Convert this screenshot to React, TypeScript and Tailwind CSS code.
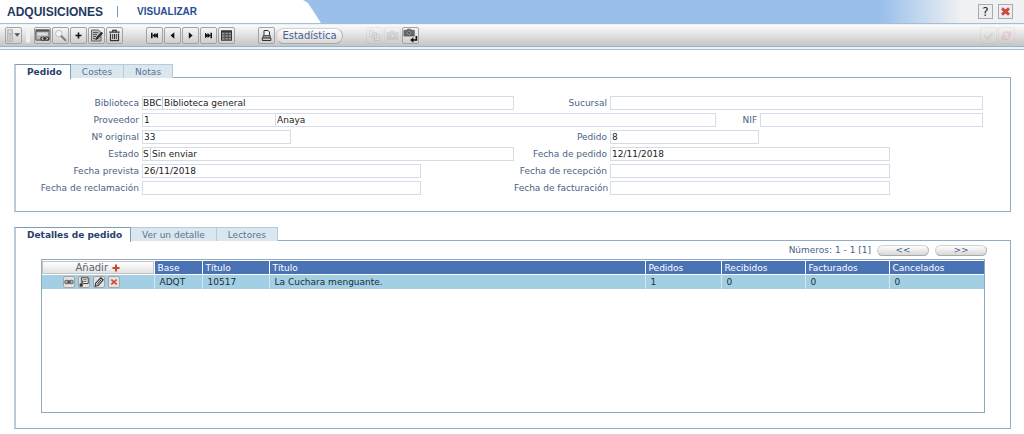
import type { ReactNode } from 'react';

type FieldProps = {
  id: string;
  label: string;
  value?: string;
  code?: string;
  codeClass?: string;
  className?: string;
};

const labelClass = 'pr-[3px] text-right whitespace-nowrap text-[#4a6285]';
const boxClass = 'h-[14px] min-w-0 border border-[#d3dce7] bg-white';
const inputClass = 'h-full min-w-0 bg-transparent text-[#222] outline-none';
const panelClass = 'border border-l-2 border-[#8fadc8] border-l-[#b9cbdc]';

const Field = ({ id, label, value = '', code, codeClass = '', className = 'w-full' }: FieldProps) => (
  <>
    <label htmlFor={id} className={labelClass}>{label}</label>
    <div className={`${boxClass} flex ${className}`}>
      {code && (
        <input
          aria-label={`${label} código`}
          defaultValue={code}
          className={`${inputClass} border-r border-[#b9cde2] ${codeClass}`}
        />
      )}
      <input id={id} defaultValue={value} className={`${inputClass} flex-1 pl-px`} />
    </div>
  </>
);

const ToolButton = ({ label, faint, children }: { label: string; faint?: boolean; children: ReactNode }) => (
  <button
    type="button"
    aria-label={label}
    disabled={faint}
    className={`flex h-[17px] w-[17px] shrink-0 items-center justify-center rounded-xs border border-[#a3a3a3] bg-linear-to-b from-[#f6f6f6] to-[#cfcfcf] ${faint ? 'opacity-15' : ''}`}
  >
    {children}
  </button>
);

const Svg = ({ children, size = 'size-[13px]' }: { children: ReactNode; size?: string }) => (
  <svg viewBox="0 0 13 13" className={`${size} shrink-0`} fill="none" stroke="#333" strokeWidth="1" aria-hidden="true">
    {children}
  </svg>
);

const IconMenu = () => (
  <Svg size="size-[15px]">
    <path d="M1.5 1.5h4v10h-4z" stroke="#b0b0b0" fill="#ddd" />
    <path d="M1.5 5h4M3.5 5v6" stroke="#b0b0b0" />
    <path d="M7.2 4.5h5L9.7 7.5z" fill="#555" stroke="none" />
  </Svg>
);

const IconWindow = () => (
  <Svg size="size-[15px]">
    <rect x=".7" y="1.5" width="11.6" height="9" rx=".5" fill="#b5b5b5" stroke="#666" />
    <path d="M1 2.4h11" stroke="#555" strokeWidth="1.6" />
    <path d="M2 5.2h9" stroke="#dedede" strokeWidth="2.4" />
    <rect x="5" y="7.8" width="3.6" height="2.8" rx="1.4" fill="#ccc" />
    <rect x="8.2" y="7.8" width="3.6" height="2.8" rx="1.4" fill="#ccc" />
    <path d="M7 9.2h3" />
  </Svg>
);

const IconSearch = () => (
  <Svg>
    <circle cx="4.8" cy="4.6" r="3.2" fill="#f4f4f4" stroke="#bbb" />
    <path d="M7.5 7.2l4 4" stroke="#808080" strokeWidth="2" strokeLinecap="round" />
  </Svg>
);

const IconPlus = () => (
  <Svg>
    <path d="M6.5 3.5v6M3.5 6.5h6" stroke="#111" strokeWidth="1.6" />
  </Svg>
);

const IconEdit = () => (
  <Svg>
    <path d="M1.5 1h7l2.5 2.5V12H1.5z" fill="#bdbdbd" stroke="#666" />
    <path d="M3 3.5h5M3 5.5h4M3 7.5h3M3 9.5h2" stroke="#555" />
    <path d="M11.5 3L6.5 8.5l-.8 2 2-.7L12.5 4.5z" fill="#333" stroke="#222" strokeWidth=".8" />
  </Svg>
);

const IconTrash = () => (
  <Svg>
    <path d="M1.3 3.2h10.4M4.8 3V1.3h3.4V3" strokeWidth="1.3" />
    <path d="M2.5 4.5v7.2h8V4.5" fill="#ddd" strokeWidth="1.2" />
    <path d="M4.7 5v5.2M6.5 5v5.2M8.3 5v5.2" />
  </Svg>
);

const IconFirst = () => (
  <Svg>
    <path d="M3 3.7h1.6v5.6H3zM10 3.7v5.6L7.4 7.2v2.1L4.6 6.5l2.8-2.8v2.1z" fill="#111" stroke="none" />
  </Svg>
);

const IconPrev = () => (
  <Svg>
    <path d="M8.3 3.3v6.4L4.5 6.5z" fill="#111" stroke="none" />
  </Svg>
);

const IconNext = () => (
  <Svg>
    <path d="M4.8 3.3v6.4l3.8-3.2z" fill="#111" stroke="none" />
  </Svg>
);

const IconLast = () => (
  <Svg>
    <path d="M10 3.7H8.4v5.6H10zM3 3.7v5.6l2.6-2.1v2.1l2.8-2.8-2.8-2.8v2.1z" fill="#111" stroke="none" />
  </Svg>
);

const IconGrid = () => (
  <Svg>
    <rect x="1.5" y="1.8" width="10" height="9.4" fill="#999" stroke="#333" />
    <path d="M1.5 2.8h10" stroke="#333" strokeWidth="1.6" />
    <path d="M5 2v9M8.2 2v9M1.5 5.8h10M1.5 8.4h10" stroke="#444" strokeWidth=".9" />
  </Svg>
);

const IconPrint = () => (
  <Svg>
    <path d="M4 6.5V1.5h4l1.5 1.5v3.5z" fill="#f4f4f4" />
    <path d="M3 6.5h7.2v3H3z" fill="#999" stroke="#555" />
    <path d="M2.3 9h8.6v2.5H2.3z" fill="#ccc" />
  </Svg>
);

const IconCopies = () => (
  <Svg>
    <path d="M1.5 1.5h4v6h-4zM4 3.5h4.5v6H4zM6.5 5.5h5v6h-5z" fill="#eee" stroke="#666" />
    <path d="M7.5 8h2.5" stroke="#666" />
  </Svg>
);

const IconCamera = () => (
  <Svg>
    <path d="M1 3.5h2.5l1-1.5h4l1 1.5H12v7H1z" fill="#888" stroke="#777" />
    <circle cx="6.5" cy="6.8" r="2.2" fill="#ddd" />
  </Svg>
);

const IconCameraReturn = () => (
  <Svg size="size-[15px]">
    <path d="M.8 2h2.3l.8-1h2.8l.8 1h2.3v5h-9z" fill="#666" stroke="#555" strokeWidth=".6" />
    <circle cx="5.3" cy="4.3" r="1.4" fill="#555" stroke="#999" strokeWidth=".7" />
    <path d="M11.6 7v3.4H8.5" stroke="#111" strokeWidth="1.4" />
    <path d="M9 8v4.8L6.2 10.4z" fill="#111" stroke="none" />
  </Svg>
);

const IconCheck = () => (
  <Svg>
    <path d="M2.5 6.5l3 3.5 5.5-6" stroke="#7c9a2e" strokeWidth="2" />
  </Svg>
);

const IconRefresh = () => (
  <Svg>
    <path d="M3 6c.5-3 4-3.5 6-2l1.5-1.2V6H7.2" stroke="#e24a5a" strokeWidth="1.8" />
    <path d="M10 7.2c-.5 3-4 3.5-6 2l-1.5 1.2V7.2h3.3" stroke="#e24a5a" strokeWidth="1.8" />
  </Svg>
);

const IconLink = () => (
  <Svg size="size-[10px]">
    <rect x="1" y="4.2" width="5.6" height="4.6" rx="2.3" fill="#bbb" strokeWidth="1.4" stroke="#666" />
    <rect x="6.4" y="4.2" width="5.6" height="4.6" rx="2.3" fill="#bbb" strokeWidth="1.4" stroke="#666" />
    <path d="M3.8 6.5h5.4" strokeWidth="1.4" />
  </Svg>
);

const IconNote = () => (
  <Svg size="size-[10px]">
    <path d="M3 1h9v7.5H5z" fill="#eee" strokeWidth="1.3" stroke="#444" />
    <path d="M3 1v8M5.5 3.5h4.5M5.5 5.8h4" strokeWidth="1.1" stroke="#555" />
    <path d="M.8 8.5h4v4h-4z" fill="#333" stroke="none" />
  </Svg>
);

const IconPencil = () => (
  <Svg size="size-[10px]">
    <path d="M8.8 1l3.2 2.8-6.5 7.4-4 .8.6-4z" fill="#ddd" strokeWidth="1.4" />
    <path d="M9.5 3.5L4 9.7" strokeWidth="1.3" />
  </Svg>
);

const IconCross = ({ size = 'size-[13px]', width = '2.8' }: { size?: string; width?: string }) => (
  <Svg size={size}>
    <path d="M3 3.4l7 6.2M10 3.4L3 9.6" stroke="#d0473a" strokeWidth={width} />
  </Svg>
);

const Tabs = ({ items }: { items: string[] }) => (
  <div role="tablist" className="relative z-10 -mb-[2px] flex h-[15px]">
    {items.map((item, i) => (
      <button
        key={item}
        type="button"
        role="tab"
        aria-selected={i === 0}
        className={
          i === 0
            ? 'border-t border-r border-l-2 border-[#7d9cb9] border-l-[#b9cbdc] bg-white pr-2 pl-[11px] font-bold text-[#27406b]'
            : 'mb-px border-t border-r border-[#b4cbd9] bg-[#dbe7ee] px-[11px] text-[#5a7391]'
        }
      >
        {item}
      </button>
    ))}
  </div>
);

const rowActions = [
  { label: 'Enlazar', icon: <IconLink /> },
  { label: 'Ver nota', icon: <IconNote /> },
  { label: 'Editar', icon: <IconPencil /> },
  { label: 'Eliminar', icon: <IconCross size="size-[10px]" width="2" /> },
];

const headers = ['Base', 'Título', 'Título', 'Pedidos', 'Recibidos', 'Facturados', 'Cancelados'];
const row = ['ADQT', '10517', 'La Cuchara menguante.', '1', '0', '0', '0'];

const pillClass =
  'rounded-full border border-[#d2d2d2] border-r-[#b5b5b5] border-b-[#a9a9a9] bg-linear-to-b from-white to-[#d8d8d8]';

const Header = () => (
  <header className="flex h-[23px] items-center justify-between bg-linear-to-r from-[#9abfea] from-86% to-[#f0f1f2] to-94%">
    <div className="flex h-full w-[321px] items-center bg-white pl-[7px] font-['Liberation_Sans',sans-serif] [clip-path:polygon(0_0,303px_0,308px_3px,321px_100%,0_100%)]">
      <h1 className="text-[12px] font-bold text-[#23395f]">ADQUISICIONES</h1>
      <span className="ml-[14px] h-[11px] w-px bg-[#6d9cc8]" />
      <h2 className="ml-[19px] text-[10px] font-bold text-[#2a4d96]">VISUALIZAR</h2>
    </div>
    <div className="flex gap-[5px] pr-[11px]">
      <button type="button" className="flex size-[15px] items-center justify-center border border-[#a9adb3] bg-[#eceef2] text-[12px] text-[#222]">
        ?
      </button>
      <button type="button" aria-label="Cerrar" className="flex size-[15px] items-center justify-center border border-[#a9adb3] bg-[#eceef2]">
        <IconCross />
      </button>
    </div>
  </header>
);

const Toolbar = () => (
  <div className="border-t border-b border-[#a3bfd0] bg-[#e9f2f7] pt-px pb-[2px]">
    <div className="flex h-[22px] items-center gap-px border-b border-[#98b5c6] bg-linear-to-b from-[#fbfbfb] to-[#c6c6c6] pr-[9px] pl-[5px]">
      <ToolButton label="Menú"><IconMenu /></ToolButton>
      <span className="mx-[3px] h-[15px] w-[4px] rounded-xs bg-[#f0f0f0]" />
      <ToolButton label="Ver ventana"><IconWindow /></ToolButton>
      <ToolButton label="Buscar"><IconSearch /></ToolButton>
      <ToolButton label="Nuevo"><IconPlus /></ToolButton>
      <ToolButton label="Modificar"><IconEdit /></ToolButton>
      <ToolButton label="Borrar"><IconTrash /></ToolButton>
      <span className="w-[21px]" />
      <ToolButton label="Primero"><IconFirst /></ToolButton>
      <ToolButton label="Anterior"><IconPrev /></ToolButton>
      <ToolButton label="Siguiente"><IconNext /></ToolButton>
      <ToolButton label="Último"><IconLast /></ToolButton>
      <ToolButton label="Lista"><IconGrid /></ToolButton>
      <span className="w-[21px]" />
      <ToolButton label="Imprimir"><IconPrint /></ToolButton>
      <button type="button" className={`${pillClass} h-[16px] w-[67px] text-[10px] text-[#4a5f8f]`}>Estadística</button>
      <span className="w-[21px]" />
      <ToolButton label="Copiar" faint><IconCopies /></ToolButton>
      <ToolButton label="Capturar" faint><IconCamera /></ToolButton>
      <ToolButton label="Recuperar captura"><IconCameraReturn /></ToolButton>
      <span className="flex-1" />
      <ToolButton label="Aceptar" faint><IconCheck /></ToolButton>
      <ToolButton label="Cancelar" faint><IconRefresh /></ToolButton>
    </div>
  </div>
);

const OrderForm = () => (
  <form className={`${panelClass} grid grid-cols-[126px_minmax(0,372fr)_96px_minmax(0,373fr)] gap-y-[3px] pt-[18px] pr-[27px] pb-[16px] leading-[14px]`}>
    <Field id="biblioteca" label="Biblioteca" code="BBC" codeClass="w-[20px]" value="Biblioteca general" />
    <Field id="sucursal" label="Sucursal" />

    <label htmlFor="proveedor" className={labelClass}>Proveedor</label>
    <div className="col-span-3 flex">
      <div className={`${boxClass} flex flex-[575]`}>
        <input id="proveedor" defaultValue="1" className={`${inputClass} flex-[132] border-r border-[#d3dce7] pl-px`} />
        <input aria-label="Nombre del proveedor" defaultValue="Anaya" className={`${inputClass} flex-[441] pl-px`} />
      </div>
      <label htmlFor="nif" className={`${labelClass} w-[44px]`}>NIF</label>
      <div className={`${boxClass} flex flex-[222]`}>
        <input id="nif" className={`${inputClass} flex-1 pl-px`} />
      </div>
    </div>

    <Field id="original" label="Nº original" value="33" className="w-2/5" />
    <Field id="pedido" label="Pedido" value="8" className="w-2/5" />
    <Field id="estado" label="Estado" code="S" codeClass="w-[8px]" value="Sin enviar" />
    <Field id="fecha-pedido" label="Fecha de pedido" value="12/11/2018" className="w-3/4" />
    <Field id="fecha-prevista" label="Fecha prevista" value="26/11/2018" className="w-3/4" />
    <Field id="fecha-recepcion" label="Fecha de recepción" className="w-3/4" />
    <Field id="fecha-reclamacion" label="Fecha de reclamación" className="w-3/4" />
    <Field id="fecha-facturacion" label="Fecha de facturación" className="w-3/4" />
  </form>
);

const OrderDetails = () => (
  <div className={`${panelClass} pt-[3px] pr-[25px] pb-[15px] pl-[25px]`}>
    <div className="-mr-[2px] flex h-[12px] items-center justify-end gap-[6px] text-[#4a6285]">
      <span>Números: 1 - 1 [1]</span>
      <button type="button" className={`${pillClass} h-[11px] w-[52px] leading-[8px]`}>&lt;&lt;</button>
      <button type="button" className={`${pillClass} h-[11px] w-[52px] leading-[8px]`}>&gt;&gt;</button>
    </div>
    <div className="mt-[3px] min-h-[154px] border border-[#8fa9bf] pt-px">
      <table className="w-full table-fixed border-collapse text-left leading-[12px]">
        <colgroup>
          <col className="w-[112px]" />
          <col className="w-[48px]" />
          <col className="w-[67px]" />
          <col />
          <col className="w-[76px]" />
          <col className="w-[84px]" />
          <col className="w-[84px]" />
          <col className="w-[95px]" />
        </colgroup>
        <thead>
          <tr className="h-[13px]">
            <th className="p-0">
              <button type="button" className="flex h-[13px] w-full items-center justify-center gap-1 border border-[#c4c4c4] bg-linear-to-b from-white to-[#e2e2e2] text-[10px] font-normal text-[#5c6470]">
                Añadir
                <svg viewBox="0 0 8 8" className="size-[8px]" stroke="#c2482f" strokeWidth="2" aria-hidden="true">
                  <path d="M4 .5v7M.5 4h7" />
                </svg>
              </button>
            </th>
            {headers.map((h, i) => (
              <th key={i} className="border-l border-white bg-[#4a73b6] p-0 pl-[3px] font-normal text-white">{h}</th>
            ))}
          </tr>
        </thead>
        <tbody>
          <tr className="h-[14px] border-t border-white bg-[#a2cfe3] text-[#1f2b38]">
            <td className="p-0">
              <div className="flex gap-[3px] pl-[21px]">
                {rowActions.map((a) => (
                  <button
                    key={a.label}
                    type="button"
                    aria-label={a.label}
                    className="flex size-[12px] items-center justify-center rounded-xs border border-[#a5a5a5] bg-[#e2e2e2]"
                  >
                    {a.icon}
                  </button>
                ))}
              </div>
            </td>
            {row.map((cell, i) => (
              <td key={i} className="border-l border-[#d3e8f1] p-0 pl-[5px]">{cell}</td>
            ))}
          </tr>
        </tbody>
      </table>
    </div>
  </div>
);

export default function App() {
  return (
    <div className="bg-white font-['DejaVu_Sans',Verdana,sans-serif] text-[9px] leading-[12px]">
      <Header />
      <Toolbar />
      <main className="pt-[14px] pr-[13px] pb-[5px] pl-[14px]">
        <section>
          <Tabs items={['Pedido', 'Costes', 'Notas']} />
          <OrderForm />
        </section>
        <section className="mt-[15px]">
          <Tabs items={['Detalles de pedido', 'Ver un detalle', 'Lectores']} />
          <OrderDetails />
        </section>
      </main>
    </div>
  );
}
